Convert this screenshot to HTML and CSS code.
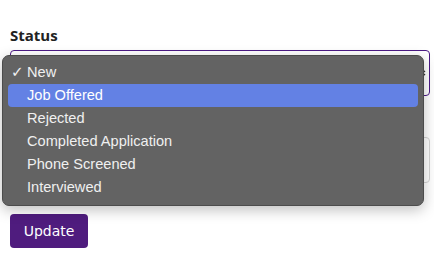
FILE: index.html
```html
<!DOCTYPE html>
<html lang="en">
<head>
  <meta charset="UTF-8">
  <meta name="viewport" content="width=device-width, initial-scale=1.0">
  <title>Update Status</title>
  <link rel="stylesheet" href="styles.css">
</head>
<body>

  <form class="statusForm">
    <label class="fieldLabel">Status</label>
    <div class="selectBox">
      <svg class="caret" width="8" height="10" viewBox="0 0 8 10">
        <path d="M1 4 L4 1 L7 4 M1 6 L4 9 L7 6" fill="none" stroke="#333" stroke-width="1.2"/>
      </svg>
    </div>

    <div class="inputBox"></div>

    <button class="update" type="submit">Update</button>

    <!-- open options menu of the status select -->
    <ul class="optionsMenu">
      <li class="checked"><span class="check">✓</span>New</li>
      <li class="active">Job Offered</li>
      <li>Rejected</li>
      <li>Completed Application</li>
      <li>Phone Screened</li>
      <li>Interviewed</li>
    </ul>
  </form>

</body>
</html>
```

FILE: styles.css
```css
  body {
      margin: 0;
      padding: 26px 4px 0 10px;
      font-family: "Open Sans", sans-serif;
      color: #222;
      background: #fff;
  }

  .statusForm {
      position: relative;
      display: flex;
      flex-direction: column;
      align-items: flex-start;
  }

  .fieldLabel {
      font-weight: bold;
      font-size: 15px;
      line-height: 18px;
      margin-bottom: 6px;
  }

  .selectBox,
  .inputBox {
      box-sizing: border-box;
      align-self: stretch;
      height: 46px;
      border-radius: 4px;
      display: flex;
      align-items: center;
      justify-content: flex-end;
      padding-right: 3px;
  }

  .selectBox {
      border: 1px solid #4b1a85;
      margin-bottom: 41px;
  }

  .inputBox {
      border: 1px solid #d4d4d4;
      margin-bottom: 31px;
  }

  .update {
      color: #fff;
      background: #4f1c7e;
      border: none;
      border-radius: 4px;
      width: 78px;
      height: 34px;
      font-family: "DejaVu Sans", sans-serif;
      font-size: 14px;
  }

  .optionsMenu {
      position: absolute;
      left: -8px;
      top: 29px;
      width: 422px;
      box-sizing: border-box;
      margin: 0;
      padding: 5px 5px 6px;
      list-style: none;
      background: #636363;
      border: 1px solid #4c4c4c;
      border-radius: 7px;
      box-shadow: 0 4px 14px rgba(0, 0, 0, 0.25);
      font-family: "Liberation Sans", sans-serif;
      font-size: 14.6px;
  }

  .optionsMenu li {
      height: 23px;
      line-height: 23px;
      padding-left: 19px;
      color: #f0f0f0;
      border-radius: 4px;
      position: relative;
  }

  .optionsMenu li.active {
      background: #6381e4;
      color: #fff;
  }

  .check {
      position: absolute;
      left: 3px;
      font-size: 15px;
      font-family: "DejaVu Sans", sans-serif;
  }
```
